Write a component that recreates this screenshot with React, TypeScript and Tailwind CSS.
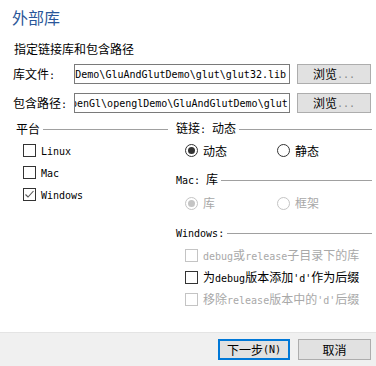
const cjk = "font-['Noto_Sans_CJK_SC',sans-serif]"
const mono = "font-['DejaVu_Sans_Mono','Liberation_Mono',monospace] text-[10px]"

// split text into ascii runs (narrow mono) and cjk runs
const Mixed: React.FC<{ text: string }> = ({ text }) => {
  const parts = text.split(/([\x20-\x7e]+)/).filter((p) => p.length > 0)
  return (
    <>
      {parts.map((p, i) =>
        /^[\x20-\x7e]+$/.test(p) ? (
          <span key={i} className={`${mono} whitespace-pre`}>
            {p}
          </span>
        ) : (
          <span key={i}>{p}</span>
        ),
      )}
    </>
  )
}

const GroupHeader: React.FC<{ text: string }> = ({ text }) => (
  <div className="flex items-center h-[16px] leading-[16px]">
    <span className="whitespace-nowrap">
      <Mixed text={text} />
    </span>
    <div className="flex-1 h-px bg-[#a0a0a0] ml-[3px]" />
  </div>
)

const CheckBox: React.FC<{ checked?: boolean; disabled?: boolean }> = ({ checked, disabled }) => (
  <div
    className={`w-[13px] h-[13px] border flex items-center justify-center bg-white shrink-0 ${
      disabled ? "border-[#c4c4c4]" : "border-[#333333]"
    }`}
  >
    {checked && (
      <svg width="11" height="11" viewBox="0 0 11 11">
        <polyline points="1.5,5.5 4,8 9.5,2" fill="none" stroke="#555" strokeWidth="1.1" />
      </svg>
    )}
  </div>
)

const Radio: React.FC<{ checked?: boolean; disabled?: boolean }> = ({ checked, disabled }) => (
  <div
    className={`w-[13px] h-[13px] rounded-full border flex items-center justify-center bg-white shrink-0 ${
      disabled ? "border-[#c4c4c4]" : "border-[#333333]"
    }`}
  >
    {checked && <div className={`w-[7px] h-[7px] rounded-full ${disabled ? "bg-[#c4c4c4]" : "bg-[#333333]"}`} />}
  </div>
)

const CheckRow: React.FC<{ label: string; checked?: boolean; disabled?: boolean; className?: string }> = ({
  label,
  checked,
  disabled,
  className = "",
}) => (
  <div className={`flex items-center gap-[5px] h-[22px] ${disabled ? "text-[#a8a8a8]" : ""} ${className}`}>
    <CheckBox checked={checked} disabled={disabled} />
    <span className="whitespace-nowrap">
      <Mixed text={label} />
    </span>
  </div>
)

const RadioItem: React.FC<{ label: string; checked?: boolean; disabled?: boolean; className?: string }> = ({
  label,
  checked,
  disabled,
  className = "",
}) => (
  <div className={`flex items-center gap-[5px] ${disabled ? "text-[#a8a8a8]" : ""} ${className}`}>
    <Radio checked={checked} disabled={disabled} />
    <span>{label}</span>
  </div>
)

const PathRow: React.FC<{ label: string; value: string; className?: string }> = ({ label, value, className = "" }) => (
  <div className={`flex items-center h-[20px] ${className}`}>
    <div className="w-[62px] pl-[1px]">
      <Mixed text={label} />
    </div>
    <div className="w-[216px] h-full border border-[#7a7a7a] bg-white flex items-center justify-end overflow-hidden px-[3px]">
      <span className={`${mono} text-[10px] whitespace-nowrap`}>{value}</span>
    </div>
    <button className="ml-[7px] w-[74px] h-full bg-[#e1e1e1] border border-[#adadad] flex items-center justify-center">
      浏览<span className={`${mono} text-[#888]`}>...</span>
    </button>
  </div>
)

export default function App() {
  return (
    <div className={`w-[376px] h-[366px] bg-white flex flex-col text-[12px] text-black ${cjk}`}>
      <div className="flex-1 pl-[12px]">
        <div className="mt-[6px] h-[22px] leading-[22px] text-[16px] text-[#2a5699]">外部库</div>
        <div className="mt-[13px] h-[16px] leading-[16px] pl-[2px]">指定链接库和包含路径</div>
        <PathRow className="mt-[7px]" label="库文件:" value="E:\OpenGl\openglDemo\GluAndGlutDemo\glut\glut32.lib" />
        <div className="mt-[9px]">
          <div className="flex items-center h-[20px]">
            <div className="w-[62px] pl-[1px]">
              <Mixed text="包含路径:" />
            </div>
            <div className="w-[216px] h-full border border-[#7a7a7a] bg-white flex items-center overflow-hidden">
              <span className={`${mono} whitespace-nowrap -ml-[4px]`}>penGl\openglDemo\GluAndGlutDemo\glut</span>
            </div>
            <button className="ml-[7px] w-[74px] h-full bg-[#e1e1e1] border border-[#adadad] flex items-center justify-center">
              浏览<span className={`${mono} text-[#888]`}>...</span>
            </button>
          </div>
        </div>

        <div className="mt-[8px] flex pl-[4px] gap-[8px]">
          <div className="w-[152px]">
            <GroupHeader text="平台" />
            <div className="mt-[2px] pl-[7px]">
              <CheckRow label="Linux" />
              <CheckRow label="Mac" />
              <CheckRow label="Windows" checked />
            </div>
          </div>

          <div className="w-[196px]">
            <GroupHeader text="链接: 动态" />
            <div className="mt-[3px] h-[21px] flex items-center pl-[9px]">
              <RadioItem className="w-[92px]" label="动态" checked />
              <RadioItem label="静态" />
            </div>
            <div className="mt-[11px]">
              <GroupHeader text="Mac: 库" />
            </div>
            <div className="mt-[4px] h-[22px] flex items-center pl-[9px]">
              <RadioItem className="w-[92px]" label="库" checked disabled />
              <RadioItem label="框架" disabled />
            </div>
            <div className="mt-[11px]">
              <GroupHeader text="Windows:" />
            </div>
            <div className="mt-[3px] pl-[9px]">
              <CheckRow label="debug或release子目录下的库" disabled />
              <CheckRow label="为debug版本添加'd'作为后缀" />
              <CheckRow label="移除release版本中的'd'后缀" disabled />
            </div>
          </div>
        </div>
      </div>

      <div className="h-[34px] bg-[#f0f0f0] border-t border-[#e4e4e4] flex items-center justify-end gap-[8px] pr-[5px]">
        <button className="w-[72px] h-[21px] bg-[#e1e1e1] border-2 border-[#0078d7] flex items-center justify-center">
          下一步<span className={mono}>(N)</span>
        </button>
        <button className="w-[73px] h-[21px] bg-[#e1e1e1] border border-[#adadad] flex items-center justify-center">
          取消
        </button>
      </div>
    </div>
  )
}
